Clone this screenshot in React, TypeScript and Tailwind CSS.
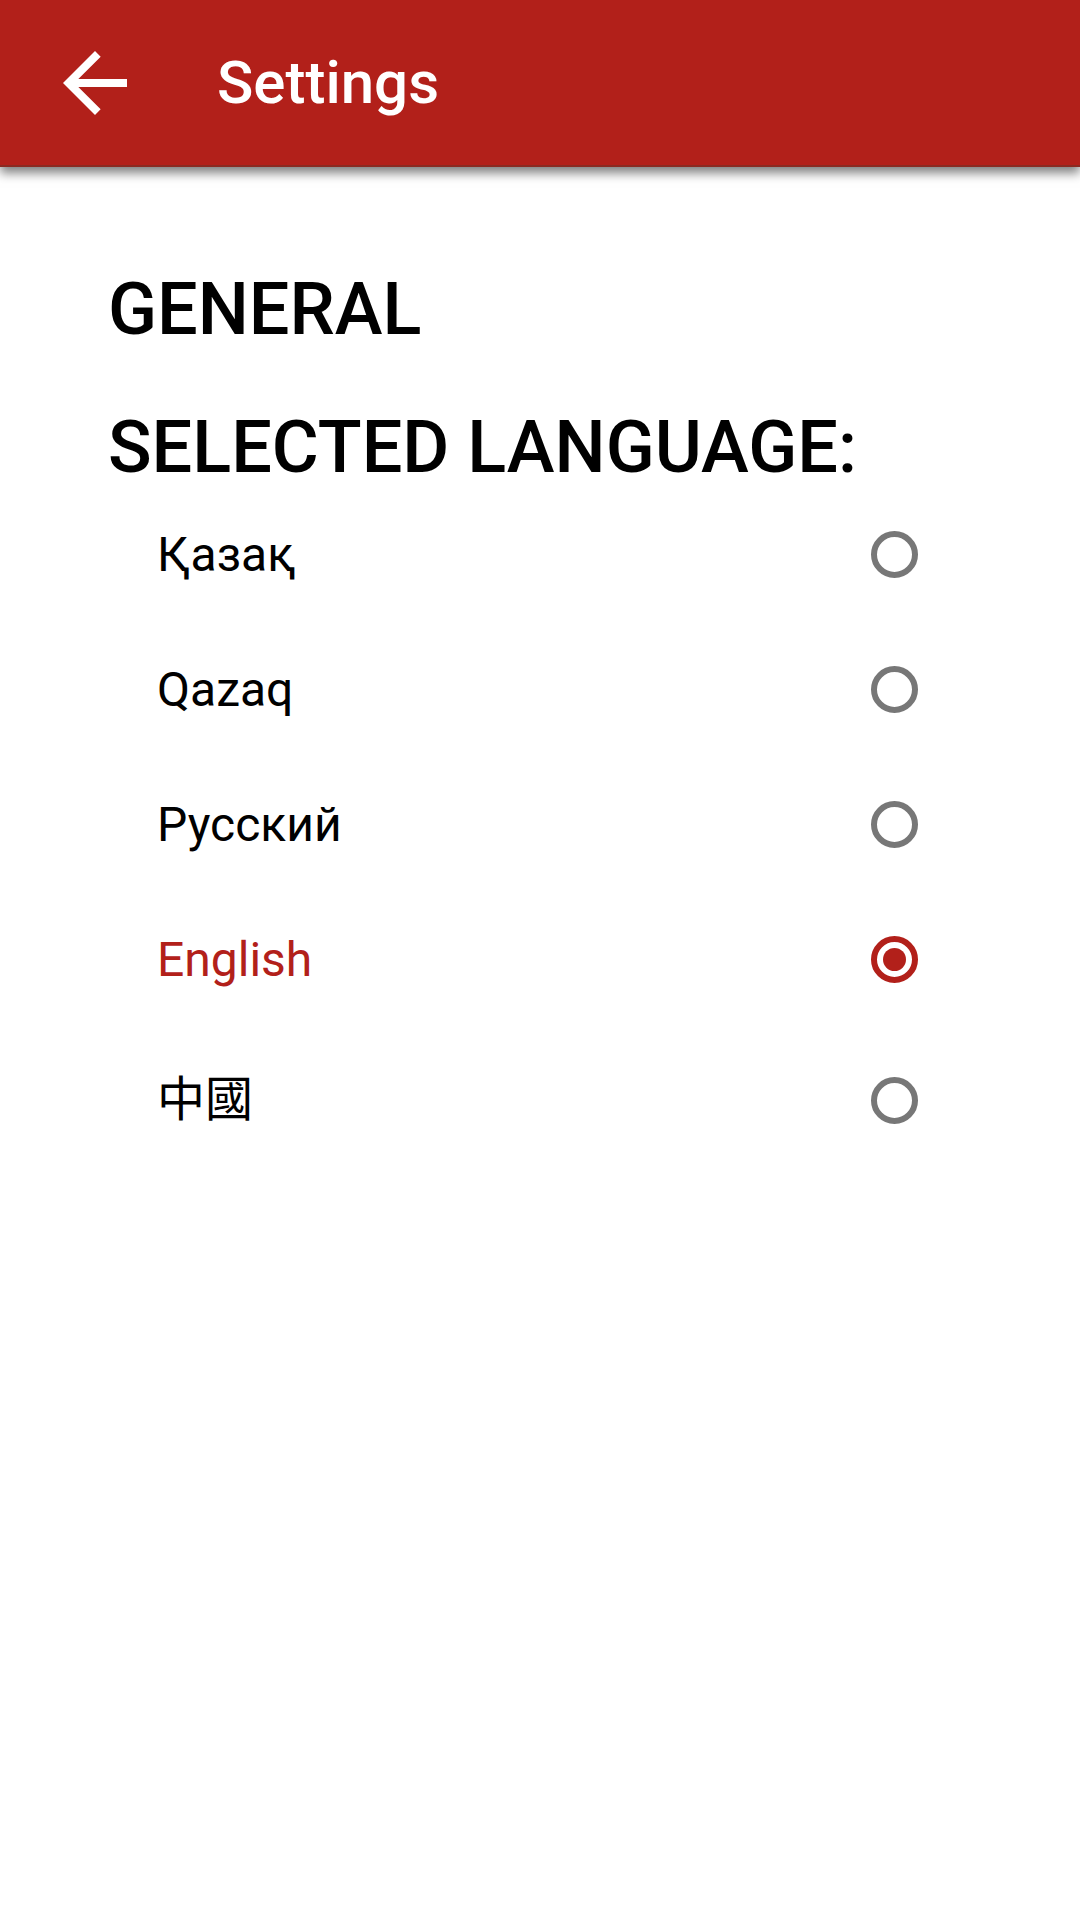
import React from "react";

const languages = [
  { label: "Қазақ", selected: false },
  { label: "Qazaq", selected: false },
  { label: "Русский", selected: false },
  { label: "English", selected: true },
  { label: "中國", selected: false },
];

function Radio({ checked }: { checked: boolean }) {
  return (
    <div
      className={`w-[47px] h-[47px] rounded-full border-[6px] flex items-center justify-center ${
        checked ? "border-[#b2201a]" : "border-[#777777]"
      }`}
    >
      {checked && <div className="w-[23px] h-[23px] rounded-full bg-[#b2201a]" />}
    </div>
  );
}

export default function App() {
  return (
    <div
      className="w-[1080px] h-[1920px] bg-white flex flex-col"
      style={{ fontFamily: 'Roboto, "Noto Sans CJK TC", sans-serif' }}
    >
      {/* App bar */}
      <header className="h-[167px] bg-[#b2201a] border-b-2 border-[#8a2a22] flex items-center shadow-[0_6px_10px_rgba(0,0,0,0.5)] relative z-10">
        <svg viewBox="0 0 24 24" className="w-[96px] h-[96px] ml-[47px]" fill="white">
          <path d="M20 11H7.83l5.59-5.59L12 4l-8 8 8 8 1.41-1.41L7.83 13H20v-2z" />
        </svg>
        <h1 className="ml-[74px] text-[60px] leading-none font-medium text-white">Settings</h1>
      </header>

      {/* Content */}
      <main className="flex flex-col">
        <h2 className="pl-[108px] mt-[107px] text-[72px] leading-none font-medium text-black">GENERAL</h2>
        <h2 className="pl-[108px] mt-[66px] text-[72px] leading-none font-medium text-black">
          SELECTED LANGUAGE:
        </h2>
        <div className="flex flex-col mt-[3px]">
          {languages.map((lang, i) => (
            <div
              key={lang.label}
              className={`flex items-center justify-between pl-[157px] pr-[162px] ${
                i === languages.length - 1 ? "h-[146px]" : "h-[135px]"
              }`}
            >
              <span
                className={`text-[48px] leading-none ${lang.selected ? "text-[#b2201a]" : "text-black"}`}
              >
                {lang.label}
              </span>
              <Radio checked={lang.selected} />
            </div>
          ))}
        </div>
      </main>
    </div>
  );
}
